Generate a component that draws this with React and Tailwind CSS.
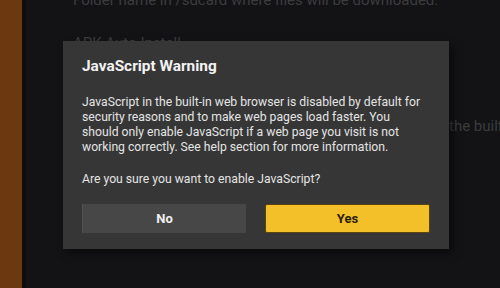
export default function App() {
  return (
    <div
      className="relative flex w-[500px] h-[288px] overflow-hidden bg-[#131315]"
      style={{ fontFamily: 'Roboto, "Liberation Sans", sans-serif' }}
    >
      <div className="w-[22px] shrink-0 bg-[#6c3810]" />
      <div className="w-[4px] shrink-0 bg-[#0d0d0f]" />
      <div className="flex-1 flex flex-col pl-[47px] text-[15px] text-[#3c3c3e]">
        <div className="-mt-[10px] leading-[20px] whitespace-nowrap">
          Folder name in /sdcard where files will be downloaded.
        </div>
        <div className="mt-[23px] leading-[20px] whitespace-nowrap">APK Auto Install</div>
        <div className="mt-[63px] flex leading-[20px] whitespace-nowrap">
          <span className="w-[376px] shrink-0 text-right pr-[4px]">Enable JavaScript in</span>
          <span>the built-in browser</span>
        </div>
      </div>

      <div className="absolute left-[63px] top-[41px] w-[386px] h-[208px] bg-[#363636] shadow-[4px_4px_8px_rgba(0,0,0,0.5)] px-[19px] pt-[15px]">
        <h2 className="text-[15.4px] font-bold leading-[20px] text-[#f2f2f2]">JavaScript Warning</h2>
        <p className="mt-[19px] text-[12.2px] leading-[15px] text-[#e4e4e4] whitespace-nowrap">
          JavaScript in the built-in web browser is disabled by default for
          <br />
          security reasons and to make web pages load faster. You
          <br />
          should only enable JavaScript if a web page you visit is not
          <br />
          working correctly. See help section for more information.
        </p>
        <p className="mt-[17px] text-[12.2px] leading-[15px] text-[#e4e4e4]">
          Are you sure you want to enable JavaScript?
        </p>
        <div className="mt-[17px] flex gap-[19px]">
          <button className="w-[165px] h-[29px] bg-[#474747] border-l border-[#525252] text-[13px] font-bold text-[#efefef]">No</button>
          <button className="w-[166px] h-[29px] rounded-[2px] border border-[#5a4410] bg-[#f3c02a] text-[13px] font-bold text-[#2a2108]">
            Yes
          </button>
        </div>
      </div>
    </div>
  );
}
